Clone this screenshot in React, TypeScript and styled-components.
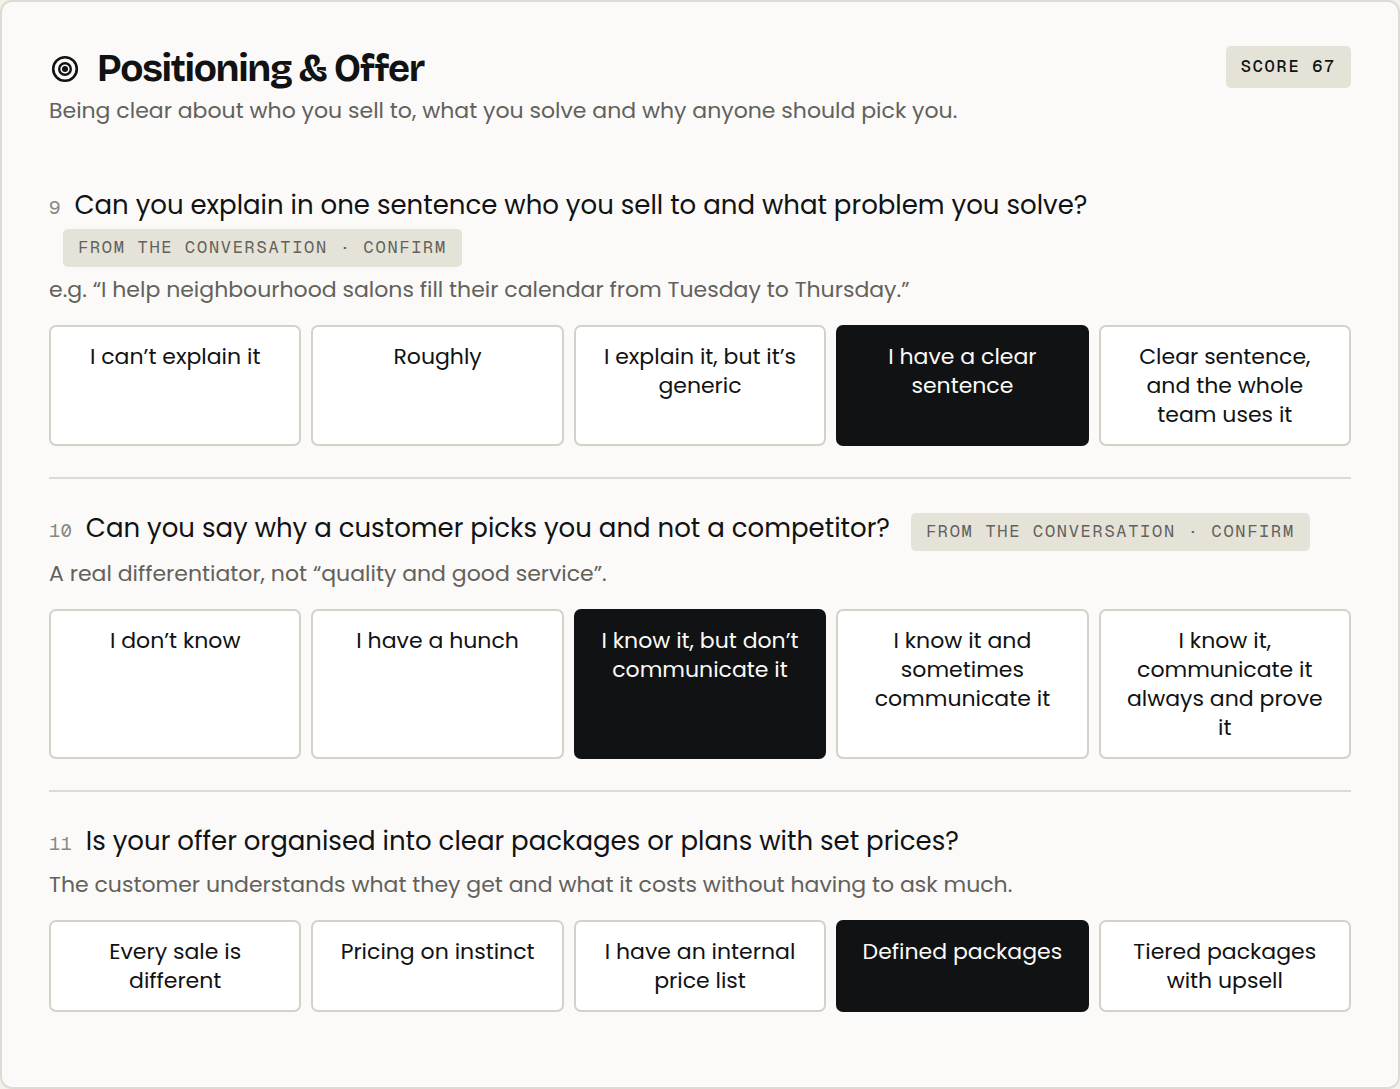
import React, { useState } from "react";
import styled, { createGlobalStyle } from "styled-components";

const sans = `Poppins, Inter, "Open Sans", sans-serif`;
const display = `"Bricolage Grotesque", Poppins, Inter, sans-serif`;
const mono = `"Geist Mono", "Liberation Mono", monospace`;

const color = {
  page: "#f3f1ea",
  card: "#fbfaf8",
  line: "#dddbd3",
  control: "#d3d1c8",
  chip: "#e5e3d8",
  ink: "#101213",
  soft: "#62615c",
  faint: "#888781",
};

const GlobalStyle = createGlobalStyle`
  *, *::before, *::after { box-sizing: border-box; }
  body {
    margin: 0;
    background: ${color.page};
    color: ${color.ink};
    font-family: ${sans};
  }
`;

const Card = styled.main`
  padding: 44px 47px 75px;
  background: ${color.card};
  border: 2px solid ${color.line};
  border-radius: 12px;
`;

const Header = styled.header`
  display: flex;
  justify-content: space-between;
  align-items: flex-start;
  gap: 24px;
  margin-bottom: 58px;
`;

const TitleRow = styled.div`
  display: flex;
  align-items: center;
  gap: 16px;
`;

const Title = styled.h1`
  margin: 0;
  font-family: ${display};
  font-size: 38px;
  line-height: 46px;
  font-weight: 700;
  letter-spacing: -0.035em;
`;

const Subtitle = styled.p`
  margin: 1px 0 0;
  font-size: 22px;
  line-height: 36px;
  color: ${color.soft};
`;

const Chip = styled.span<{ $strong?: boolean }>`
  display: inline-block;
  flex: none;
  padding: ${(p) => (p.$strong ? "8px 15px 10px" : "6px 15px 8px")};
  border-radius: 5px;
  background: ${color.chip};
  color: ${(p) => (p.$strong ? color.ink : color.soft)};
  font-family: ${mono};
  font-size: 17px;
  line-height: 24px;
  font-weight: ${(p) => (p.$strong ? 500 : 400)};
  letter-spacing: 0.1em;
  text-transform: uppercase;
  white-space: nowrap;
`;

const ConfirmChip = styled(Chip)`
  margin-left: 14px;
`;

const Question = styled.section`
  & + & {
    margin-top: 31px;
    padding-top: 31px;
    border-top: 2px solid ${color.line};
  }
`;

const Prompt = styled.h2`
  margin: 0;
  font-size: 26px;
  line-height: 36px;
  font-weight: 400;
`;

const Index = styled.span`
  margin-right: 14px;
  color: ${color.faint};
  font-family: ${mono};
  font-size: 19px;
`;

const Hint = styled.p`
  margin: 5px 0 17px;
  font-size: 22px;
  line-height: 36px;
  color: ${color.soft};
`;

const Options = styled.div`
  display: grid;
  grid-template-columns: repeat(5, minmax(0, 1fr));
  gap: 10px;
`;

const Option = styled.button<{ $selected: boolean }>`
  display: flex;
  justify-content: center;
  align-items: flex-start;
  padding: 15px 22px;
  border: 2px solid ${(p) => (p.$selected ? color.ink : color.control)};
  border-radius: 7px;
  background: ${(p) => (p.$selected ? color.ink : "#ffffff")};
  color: ${(p) => (p.$selected ? color.card : color.ink)};
  font-family: inherit;
  font-size: 22px;
  line-height: 29px;
  text-align: center;
  cursor: pointer;
`;

const TargetIcon = () => (
  <svg width="32" height="32" viewBox="0 0 32 32" fill="none" stroke={color.ink} aria-hidden="true">
    <circle cx="16" cy="16" r="11.8" strokeWidth="2.6" />
    <circle cx="16" cy="16" r="5.8" strokeWidth="2.4" />
    <circle cx="16" cy="16" r="3" fill={color.ink} stroke="none" />
  </svg>
);

type Item = {
  number: number;
  prompt: string;
  hint: string;
  confirm: boolean;
  options: string[];
  answer: number;
};

const items: Item[] = [
  {
    number: 9,
    prompt: "Can you explain in one sentence who you sell to and what problem you solve?",
    hint: "e.g. “I help neighbourhood salons fill their calendar from Tuesday to Thursday.”",
    confirm: true,
    options: [
      "I can’t explain it",
      "Roughly",
      "I explain it, but it’s generic",
      "I have a clear sentence",
      "Clear sentence, and the whole team uses it",
    ],
    answer: 3,
  },
  {
    number: 10,
    prompt: "Can you say why a customer picks you and not a competitor?",
    hint: "A real differentiator, not “quality and good service”.",
    confirm: true,
    options: [
      "I don’t know",
      "I have a hunch",
      "I know it, but don’t communicate it",
      "I know it and sometimes communicate it",
      "I know it, communicate it always and prove it",
    ],
    answer: 2,
  },
  {
    number: 11,
    prompt: "Is your offer organised into clear packages or plans with set prices?",
    hint: "The customer understands what they get and what it costs without having to ask much.",
    confirm: false,
    options: [
      "Every sale is different",
      "Pricing on instinct",
      "I have an internal price list",
      "Defined packages",
      "Tiered packages with upsell",
    ],
    answer: 3,
  },
];

function QuestionBlock({ item }: { item: Item }) {
  const [answer, setAnswer] = useState(item.answer);
  const id = `question-${item.number}`;
  return (
    <Question>
      <Prompt id={id}>
        <Index>{item.number}</Index>
        {item.prompt} {item.confirm && <ConfirmChip>From the conversation · confirm</ConfirmChip>}
      </Prompt>
      <Hint>{item.hint}</Hint>
      <Options role="group" aria-labelledby={id}>
        {item.options.map((label, i) => (
          <Option
            key={label}
            type="button"
            aria-pressed={i === answer}
            $selected={i === answer}
            onClick={() => setAnswer(i)}
          >
            {label}
          </Option>
        ))}
      </Options>
    </Question>
  );
}

export default function App() {
  return (
    <>
      <GlobalStyle />
      <Card>
        <Header>
          <div>
            <TitleRow>
              <TargetIcon />
              <Title>Positioning &amp; Offer</Title>
            </TitleRow>
            <Subtitle>
              Being clear about who you sell to, what you solve and why anyone should pick you.
            </Subtitle>
          </div>
          <Chip $strong>Score 67</Chip>
        </Header>
        {items.map((item) => (
          <QuestionBlock key={item.number} item={item} />
        ))}
      </Card>
    </>
  );
}
